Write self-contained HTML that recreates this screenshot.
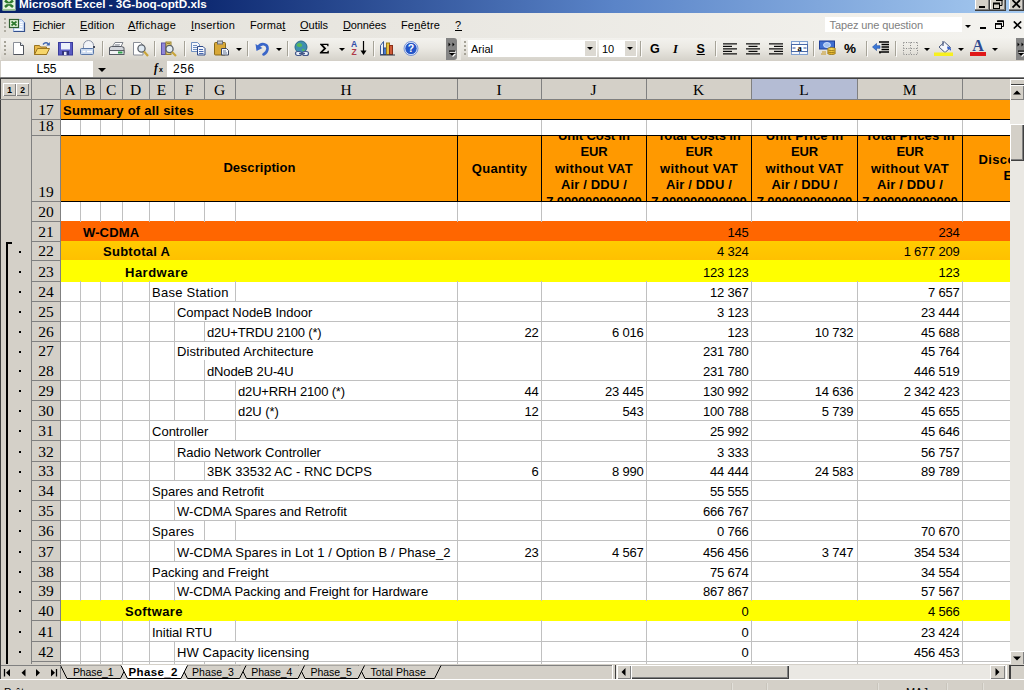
<!DOCTYPE html>
<html><head><meta charset="utf-8"><title>Microsoft Excel - 3G-boq-optD.xls</title>
<style>
html,body{margin:0;padding:0;}
body{width:1024px;height:690px;overflow:hidden;position:relative;background:#d4d0c8;
font-family:"Liberation Sans",sans-serif;font-size:12px;color:#000;}
#s{position:absolute;left:0;top:0;width:1024px;height:690px;overflow:hidden;}
#s div,#s svg{position:absolute;box-sizing:border-box;}
</style></head><body><div id="s">
<div style="left:0px;top:0px;width:1024px;height:690px;background:#d4d0c8;"></div>
<div style="left:0px;top:0px;width:1024px;height:13px;background:linear-gradient(to right,#0a246a 0%,#0e2a72 20%,#5a84c8 60%,#a6caf0 100%);"></div>
<div style="top:-3.55px;font-size:11.7px;line-height:15px;height:15px;color:#fff;white-space:pre;font-weight:bold;left:19px;">Microsoft Excel - 3G-boq-optD.xls</div>
<svg style="left:2px;top:0" width="15" height="12" viewBox="0 0 15 12"><rect x="0.5" y="-4" width="13" height="14.500" fill="#e6f4dc"/><rect x="0.5" y="9" width="13" height="1.500" fill="#9cc890"/><path d="M3 0.500 L11 7 M11 0.500 L3 7" stroke="#2e7a2e" stroke-width="2.600"/><path d="M3 3.700 h8" stroke="#e6f4dc" stroke-width="0.800"/></svg>
<div style="left:975px;top:-4px;width:15px;height:14.5px;background:#d4d0c8;box-shadow:inset -1px -1px 0 #404040,inset -2px -2px 0 #808080,inset 1px 1px 0 #fff;"></div>
<div style="left:979px;top:6px;width:6px;height:2px;background:#000;"></div>
<div style="left:990px;top:-4px;width:16px;height:14.5px;background:#d4d0c8;box-shadow:inset -1px -1px 0 #404040,inset -2px -2px 0 #808080,inset 1px 1px 0 #fff;"></div>
<svg style="left:993px;top:0" width="10" height="10"><path d="M3.5 0 h5.5 v5.5 h-2" fill="none" stroke="#000" stroke-width="1"/><rect x="3" y="-1" width="6.5" height="2" fill="#000"/><rect x="0.5" y="3.5" width="6" height="5" fill="none" stroke="#000"/><rect x="0" y="2.5" width="7" height="2" fill="#000"/></svg>
<div style="left:1009px;top:-4px;width:15px;height:14.5px;background:#d4d0c8;box-shadow:inset -1px -1px 0 #404040,inset -2px -2px 0 #808080,inset 1px 1px 0 #fff;"></div>
<svg style="left:1012px;top:0" width="10" height="9"><path d="M0.5 0 L8 7.5 M8 0 L0.5 7.5" stroke="#000" stroke-width="1.8"/></svg>
<div style="left:0px;top:13px;width:1024px;height:24px;background:linear-gradient(to right,#e4e2db 0%,#e9e7e1 40%,#f4f3ef 100%);"></div>
<div style="left:4px;top:18px;width:2px;height:2px;background:#b0ada2;"></div>
<div style="left:4px;top:22px;width:2px;height:2px;background:#b0ada2;"></div>
<div style="left:4px;top:26px;width:2px;height:2px;background:#b0ada2;"></div>
<div style="left:4px;top:30px;width:2px;height:2px;background:#b0ada2;"></div>
<svg style="left:8px;top:17px" width="18" height="16" viewBox="0 0 18 16"><path d="M5.500 2.500 h8 l3 3 v9 h-11z" fill="#d6e4fa" stroke="#8fa8d8"/><path d="M16.500 5.500 v9 h-11" fill="none" stroke="#34508c" stroke-width="1.200"/><path d="M11.500 5.500h3M11.500 7.500h3M11.500 9.500h3M7 12.500h7" stroke="#fff" stroke-width="1"/><rect x="1.500" y="2.500" width="9" height="8" fill="#e6f4dc" stroke="#2f5f2f" stroke-width="1.200"/><path d="M3.500 4.500 L8.500 8.500 M8.500 4.500 L3.500 8.500" stroke="#2e7a2e" stroke-width="1.700"/></svg>
<div style="left:33px;top:18px;font-size:11px;line-height:14px;white-space:pre;letter-spacing:-0.145px;"><u>F</u>ichier</div>
<div style="left:80px;top:18px;font-size:11px;line-height:14px;white-space:pre;letter-spacing:0.123px;"><u>E</u>dition</div>
<div style="left:128px;top:18px;font-size:11px;line-height:14px;white-space:pre;letter-spacing:0.259px;"><u>A</u>ffichage</div>
<div style="left:191px;top:18px;font-size:11px;line-height:14px;white-space:pre;letter-spacing:0.2px;"><u>I</u>nsertion</div>
<div style="left:250px;top:18px;font-size:11px;line-height:14px;white-space:pre;letter-spacing:0.109px;">Forma<u>t</u></div>
<div style="left:300px;top:18px;font-size:11px;line-height:14px;white-space:pre;letter-spacing:-0.021px;"><u>O</u>utils</div>
<div style="left:343px;top:18px;font-size:11px;line-height:14px;white-space:pre;letter-spacing:-0.15px;"><u>D</u>onnées</div>
<div style="left:401px;top:18px;font-size:11px;line-height:14px;white-space:pre;letter-spacing:0.154px;">Fe<u>n</u>être</div>
<div style="left:455px;top:18px;font-size:11px;line-height:14px;white-space:pre;letter-spacing:0.875px;"><u>?</u></div>
<div style="left:825px;top:17px;width:137px;height:15px;background:#fff;"></div>
<div style="top:18.19px;font-size:11px;line-height:14px;height:14px;color:#808080;white-space:pre;letter-spacing:-0.112px;left:829.5px;">Tapez une question</div>
<svg style="left:965px;top:25px" width="6" height="3"><path d="M0 0 h6 l-3 3z" fill="#000"/></svg>
<div style="left:980px;top:27px;width:6px;height:2px;background:#000;"></div>
<svg style="left:995px;top:20px" width="10" height="10"><path d="M2.5 1 h6 v5.5 h-2" fill="none" stroke="#000" stroke-width="1"/><rect x="2" y="0.5" width="7" height="1.6" fill="#000"/><rect x="0.5" y="3.5" width="6" height="5" fill="none" stroke="#000"/><rect x="0" y="3" width="7" height="1.8" fill="#000"/></svg>
<svg style="left:1013px;top:21px" width="10" height="9"><path d="M0.8 0.5 L8.2 7.5 M8.2 0.5 L0.8 7.5" stroke="#000" stroke-width="1.7"/></svg>
<div style="left:0px;top:37px;width:1024px;height:23px;background:linear-gradient(to right,#e4e2db 0%,#e9e7e1 40%,#f4f3ef 100%);"></div>
<div style="left:1px;top:38px;width:446px;height:22px;background:linear-gradient(to bottom,#f3f2ee 0%,#ebe9e3 45%,#d6d3cb 100%);border-radius:0 0 0 2px;"></div>
<div style="left:446px;top:38px;width:11px;height:22px;background:#848484;border-radius:0 3px 3px 0;"></div>
<div style="left:461px;top:38px;width:556px;height:22px;background:linear-gradient(to bottom,#f3f2ee 0%,#ebe9e3 45%,#d6d3cb 100%);"></div>
<div style="left:1016px;top:38px;width:8px;height:22px;background:#848484;"></div>
<div style="left:4px;top:41px;width:2px;height:2px;background:#a5a297;"></div>
<div style="left:4px;top:45px;width:2px;height:2px;background:#a5a297;"></div>
<div style="left:4px;top:49px;width:2px;height:2px;background:#a5a297;"></div>
<div style="left:4px;top:53px;width:2px;height:2px;background:#a5a297;"></div>
<div style="left:464px;top:41px;width:2px;height:2px;background:#a5a297;"></div>
<div style="left:464px;top:45px;width:2px;height:2px;background:#a5a297;"></div>
<div style="left:464px;top:49px;width:2px;height:2px;background:#a5a297;"></div>
<div style="left:464px;top:53px;width:2px;height:2px;background:#a5a297;"></div>
<div style="left:102px;top:41px;width:1px;height:15px;background:#a6a398;"></div>
<div style="left:103px;top:42px;width:1px;height:15px;background:#fbfaf8;"></div>
<div style="left:154px;top:41px;width:1px;height:15px;background:#a6a398;"></div>
<div style="left:155px;top:42px;width:1px;height:15px;background:#fbfaf8;"></div>
<div style="left:184px;top:41px;width:1px;height:15px;background:#a6a398;"></div>
<div style="left:185px;top:42px;width:1px;height:15px;background:#fbfaf8;"></div>
<div style="left:247px;top:41px;width:1px;height:15px;background:#a6a398;"></div>
<div style="left:248px;top:42px;width:1px;height:15px;background:#fbfaf8;"></div>
<div style="left:287px;top:41px;width:1px;height:15px;background:#a6a398;"></div>
<div style="left:288px;top:42px;width:1px;height:15px;background:#fbfaf8;"></div>
<div style="left:373px;top:41px;width:1px;height:15px;background:#a6a398;"></div>
<div style="left:374px;top:42px;width:1px;height:15px;background:#fbfaf8;"></div>
<div style="left:640px;top:41px;width:1px;height:15px;background:#a6a398;"></div>
<div style="left:641px;top:42px;width:1px;height:15px;background:#fbfaf8;"></div>
<div style="left:715px;top:41px;width:1px;height:15px;background:#a6a398;"></div>
<div style="left:716px;top:42px;width:1px;height:15px;background:#fbfaf8;"></div>
<div style="left:813px;top:41px;width:1px;height:15px;background:#a6a398;"></div>
<div style="left:814px;top:42px;width:1px;height:15px;background:#fbfaf8;"></div>
<div style="left:866px;top:41px;width:1px;height:15px;background:#a6a398;"></div>
<div style="left:867px;top:42px;width:1px;height:15px;background:#fbfaf8;"></div>
<div style="left:895px;top:41px;width:1px;height:15px;background:#a6a398;"></div>
<div style="left:896px;top:42px;width:1px;height:15px;background:#fbfaf8;"></div>
<svg style="left:236px;top:48px" width="6" height="3"><path d="M0 0 h6 l-3 3z" fill="#000"/></svg>
<svg style="left:276px;top:48px" width="6" height="3"><path d="M0 0 h6 l-3 3z" fill="#000"/></svg>
<svg style="left:339px;top:48px" width="6" height="3"><path d="M0 0 h6 l-3 3z" fill="#000"/></svg>
<svg style="left:924px;top:48px" width="6" height="3"><path d="M0 0 h6 l-3 3z" fill="#000"/></svg>
<svg style="left:958px;top:48px" width="6" height="3"><path d="M0 0 h6 l-3 3z" fill="#000"/></svg>
<svg style="left:992px;top:48px" width="6" height="3"><path d="M0 0 h6 l-3 3z" fill="#000"/></svg>
<svg style="left:447px;top:40px" width="10" height="18" viewBox="0 0 10 18"><path d="M1.5 2.5 l2 2 l-2 2z M5.5 2.5 l2 2 l-2 2z" fill="#000"/><rect x="3" y="11.500" width="6" height="1.200" fill="#fff"/><path d="M3 14 h6 l-3 3z" fill="#fff"/><rect x="2" y="10.500" width="6" height="1.200" fill="#000"/><path d="M2 13 h6 l-3 3z" fill="#000"/></svg>
<svg style="left:1016px;top:40px" width="8" height="18" viewBox="0 0 8 18"><path d="M1.5 2.5 l2 2 l-2 2z M5.5 2.5 l2 2 l-2 2z" fill="#000"/><rect x="3" y="11.500" width="6" height="1.200" fill="#fff"/><path d="M3 14 h6 l-3 3z" fill="#fff"/><rect x="2" y="10.500" width="6" height="1.200" fill="#000"/><path d="M2 13 h6 l-3 3z" fill="#000"/></svg>
<svg style="left:12px;top:41px" width="14" height="15" viewBox="0 0 14 15"><path d="M1.5 1.5 h7 l3 3 v9 h-10z" fill="#fff" stroke="#8a8f98"/><path d="M11.5 4.5 v9 h-10" fill="none" stroke="#50545c"/><path d="M8.5 1.5 v3 h3" fill="#dfe6f0" stroke="#50545c"/></svg>
<svg style="left:33px;top:41px" width="18" height="15" viewBox="0 0 18 15"><path d="M1.5 4.5 h5 l1 1.500 h6 v7.5 h-12z" fill="#e8b84a" stroke="#9a7420"/><path d="M1.5 13.500 l3 -6 h12 l-3 6z" fill="#f7d66a" stroke="#9a7420"/><path d="M10 3.500 c2 -2.500 4.500 -2 5.500 0" fill="none" stroke="#3c64b0" stroke-width="1.4"/><path d="M16.800 1 v3.600 h-3.600z" fill="#3c64b0"/></svg>
<svg style="left:58px;top:41px" width="15" height="15" viewBox="0 0 15 15"><rect x="0.5" y="1.500" width="14" height="12.500" fill="#5a5cc4" stroke="#3a3c9c"/><rect x="3" y="2" width="9" height="6.500" fill="#eef2fb"/><rect x="4" y="10" width="7" height="4" fill="#30327c"/><rect x="6" y="10.800" width="2.500" height="3.200" fill="#e8ecf6"/></svg>
<svg style="left:80px;top:40px" width="17" height="16" viewBox="0 0 17 16"><path d="M3.500 9 v-3.500 a5 5 0 0 1 10 0 v3.500" fill="#f1f3f7" stroke="#8a93a5"/><rect x="13" y="6" width="2" height="2" fill="#404858"/><rect x="0.500" y="8.500" width="13" height="6" rx="1" fill="#c9d8ee" stroke="#5776a8"/><path d="M2.500 11.500 h3 M7 11.500 h5" stroke="#fff" stroke-width="1.600"/></svg>
<svg style="left:108px;top:41px" width="17" height="15" viewBox="0 0 17 15"><path d="M4.500 5.500 l2.500 -4 h8 l-2 4z" fill="#fff" stroke="#80858c"/><path d="M7 3.500 h5 M6.500 4.600 h5" stroke="#9aa0a8" stroke-width="0.800"/><path d="M1.500 6.500 l2 -1 h10 l2.500 1 v5.500 h-14.500z" fill="#d4d7dc" stroke="#585c64"/><rect x="1.500" y="9.500" width="14.500" height="4" fill="#f2f3f5" stroke="#585c64"/><rect x="10" y="10.500" width="4.500" height="2" fill="#2fa04a"/></svg>
<svg style="left:132px;top:41px" width="18" height="16" viewBox="0 0 18 16"><path d="M1.500 1.500 h7 l2.500 2.500 v10 h-9.500z" fill="#fff" stroke="#8a8f98"/><circle cx="9.500" cy="7.500" r="3.600" fill="#dfe9f2" stroke="#5a6068" stroke-width="1.300"/><path d="M12 10.500 l4 4.500" stroke="#c8a43a" stroke-width="2.200"/></svg>
<svg style="left:160px;top:40px" width="19" height="17" viewBox="0 0 19 17"><rect x="1.500" y="3" width="4" height="11.500" fill="#8f86d8" stroke="#5a52a8"/><rect x="6" y="2" width="5" height="12.500" fill="#e8d078" stroke="#9a8430"/><path d="M7 3.500 h3" stroke="#9a8430"/><circle cx="9.500" cy="9" r="3.600" fill="#e2ecf4" stroke="#5a6068" stroke-width="1.300"/><path d="M12 12 l4 4" stroke="#c8a43a" stroke-width="2.200"/></svg>
<svg style="left:190px;top:41px" width="17" height="15" viewBox="0 0 17 15"><path d="M1.500 1.500 h6 l2 2 v7 h-8z" fill="#f4f7fc" stroke="#6f8fc0"/><path d="M3 4.500 h4 M3 6.500 h5 M3 8.500 h5" stroke="#6f8fc0"/><path d="M7.500 5.500 h5.500 l2 2 v6.500 h-7.500z" fill="#f4f7fc" stroke="#2f4a88"/><path d="M9 8.500 h4 M9 10.500 h4.500 M9 12.500 h4.500" stroke="#4a6ab0"/></svg>
<svg style="left:213px;top:40px" width="18" height="16" viewBox="0 0 18 16"><rect x="1.500" y="2.500" width="11" height="12.500" rx="1" fill="#d8a838" stroke="#8a6a18"/><rect x="4.500" y="1" width="5" height="3" fill="#c8ccd4" stroke="#6a6e78"/><path d="M8.500 8.500 h5 l2 2 v4.500 h-7z" fill="#f0f4fa" stroke="#3a4660"/><path d="M10 11 h3 M10 13 h4" stroke="#6a7a98"/></svg>
<svg style="left:255px;top:41px" width="15" height="15" viewBox="0 0 15 15"><path d="M3 6.500 c3 -5.500 10 -3.500 9.500 1.500 c-0.300 3 -2 4.500 -4 5.500" fill="none" stroke="#3a66c8" stroke-width="2.600" stroke-linecap="round"/><path d="M0.500 3 l1 7 l6 -3z" fill="#3a66c8"/></svg>
<svg style="left:293px;top:40px" width="18" height="17" viewBox="0 0 18 17"><circle cx="8" cy="7" r="6" fill="#3f8fb0" stroke="#2a6a8a"/><path d="M4 4 c2 -2 4 -1 5 0.500 c1 1.500 -1 3 -3 2.500 c-2 -0.500 -3 -1.500 -2 -3z" fill="#58b858"/><path d="M9 9 c1.500 -0.500 3 0.500 2.500 2 c-1 1 -2.500 0 -2.500 -2z" fill="#58b858"/><rect x="2.500" y="11.500" width="6" height="4" rx="2" fill="#e8eef8" stroke="#44588a" stroke-width="1.200"/><rect x="9.500" y="11.500" width="6" height="4" rx="2" fill="#e8eef8" stroke="#44588a" stroke-width="1.200"/><path d="M6 13.500 h6" stroke="#44588a" stroke-width="1.400"/></svg>
<svg style="left:319px;top:43px" width="11" height="11" viewBox="0 0 11 11"><path d="M1 0.800 h8.500 v2.400 h-1 l-0.500 -1.200 h-4 l3.300 3.500 l-3.600 3.500 h4.500 l0.600 -1.300 h1 v2.700 h-9 v-0.800 l4 -4 l-3.800 -4z" fill="#000"/></svg>
<div style="top:39.05px;font-size:8.5px;line-height:11px;height:11px;color:#2f4fa8;white-space:pre;font-weight:bold;left:351px;">A</div>
<div style="top:46.55px;font-size:8.5px;line-height:11px;height:11px;color:#b03a48;white-space:pre;font-weight:bold;left:351.5px;">Z</div>
<svg style="left:360px;top:41px" width="7" height="15" viewBox="0 0 7 15"><path d="M3.500 0 v12" stroke="#000" stroke-width="1.200"/><path d="M0.500 9.500 l3 4.500 l3 -4.500z" fill="#000"/></svg>
<svg style="left:379px;top:40px" width="17" height="16" viewBox="0 0 17 16"><path d="M1.500 14.500 v-9 l3 -4 v13z" fill="#e8eef8" stroke="#3a5a98"/><rect x="4.500" y="8" width="3" height="6.500" fill="#4a78c8" stroke="#2a4a88"/><rect x="7.500" y="3" width="3" height="11.500" fill="#e8c040" stroke="#9a7a18"/><rect x="10.500" y="5.500" width="3" height="9" fill="#d05a38" stroke="#8a3018"/><path d="M1 15 h15" stroke="#303848"/></svg>
<svg style="left:403px;top:41px" width="16" height="15" viewBox="0 0 16 15"><circle cx="8" cy="7.500" r="6.200" fill="#2456c8" stroke="#dfe8fb" stroke-width="1"/><circle cx="8" cy="7.500" r="7" fill="none" stroke="#4a72d0" stroke-width="0.700"/><text x="8" y="11.300" font-family="Liberation Sans" font-weight="bold" font-size="10.500" fill="#fff" text-anchor="middle">?</text></svg>
<div style="left:468px;top:40px;width:129px;height:17px;background:#fff;"></div>
<div style="left:585px;top:41px;width:11px;height:15px;background:#dcd9d2;"></div>
<div style="top:41.69px;font-size:11px;line-height:14px;height:14px;color:#000;white-space:pre;left:471px;">Arial</div>
<svg style="left:587px;top:47px" width="6" height="3"><path d="M0 0 h6 l-3 3z" fill="#000"/></svg>
<div style="left:599px;top:40px;width:38px;height:17px;background:#fff;"></div>
<div style="left:625px;top:41px;width:11px;height:15px;background:#dcd9d2;"></div>
<div style="top:41.69px;font-size:11px;line-height:14px;height:14px;color:#000;white-space:pre;left:602px;">10</div>
<svg style="left:627px;top:47px" width="6" height="3"><path d="M0 0 h6 l-3 3z" fill="#000"/></svg>
<div style="top:40.67px;font-size:12.5px;line-height:16px;height:16px;color:#000;white-space:pre;font-weight:bold;left:650px;">G</div>
<div style="top:40.78px;font-size:12.5px;line-height:16px;height:16px;color:#000;white-space:pre;font-family:'Liberation Serif',serif;font-weight:bold;font-style:italic;left:673px;">I</div>
<div style="top:40.67px;font-size:12.5px;line-height:16px;height:16px;color:#000;white-space:pre;font-weight:bold;left:696.5px;text-decoration:underline;">S</div>
<svg style="left:723px;top:43px" width="15" height="12" viewBox="0 0 15 12"><rect x="0" y="0.3" width="14" height="1.150" fill="#000"/><rect x="0" y="2.8" width="9" height="1.150" fill="#000"/><rect x="0" y="5.3" width="14" height="1.150" fill="#000"/><rect x="0" y="7.8" width="9" height="1.150" fill="#000"/><rect x="0" y="10.3" width="14" height="1.150" fill="#000"/></svg>
<svg style="left:746px;top:43px" width="15" height="12" viewBox="0 0 15 12"><rect x="0" y="0.3" width="14" height="1.150" fill="#000"/><rect x="2.5" y="2.8" width="9" height="1.150" fill="#000"/><rect x="0" y="5.3" width="14" height="1.150" fill="#000"/><rect x="2.5" y="7.8" width="9" height="1.150" fill="#000"/><rect x="0" y="10.3" width="14" height="1.150" fill="#000"/></svg>
<svg style="left:769px;top:43px" width="15" height="12" viewBox="0 0 15 12"><rect x="0" y="0.3" width="14" height="1.150" fill="#000"/><rect x="5" y="2.8" width="9" height="1.150" fill="#000"/><rect x="0" y="5.3" width="14" height="1.150" fill="#000"/><rect x="5" y="7.8" width="9" height="1.150" fill="#000"/><rect x="0" y="10.3" width="14" height="1.150" fill="#000"/></svg>
<svg style="left:791px;top:40px" width="17" height="16" viewBox="0 0 17 16"><rect x="0.500" y="1.500" width="16" height="13" fill="#f4f7fc" stroke="#7f9fd0"/><path d="M0.500 4.500 h16 M0.500 11.500 h16 M8.500 1.500 v3 M8.500 11.500 v3" stroke="#7f9fd0"/><rect x="0.500" y="4.500" width="16" height="7" fill="#fff" stroke="#4a6aa8"/><text x="8.500" y="11" font-family="Liberation Serif" font-weight="bold" font-size="8.500" text-anchor="middle" fill="#000">a</text><path d="M1.500 8 h3 M12.500 8 h3" stroke="#2a4a98" stroke-width="1.200"/></svg>
<svg style="left:819px;top:40px" width="18" height="16" viewBox="0 0 18 16"><rect x="0.500" y="1" width="15" height="8" fill="#3f6fd0" stroke="#1f3f98"/><ellipse cx="8" cy="5" rx="3.500" ry="2.500" fill="#9fc0f0" stroke="#dfeaff" stroke-width="0.800"/><ellipse cx="12.500" cy="13" rx="4" ry="1.500" fill="#e8b830" stroke="#8a6a10" stroke-width="0.800"/><ellipse cx="12.500" cy="11" rx="4" ry="1.500" fill="#f0c840" stroke="#8a6a10" stroke-width="0.800"/><ellipse cx="12.500" cy="9" rx="4" ry="1.500" fill="#f8d858" stroke="#8a6a10" stroke-width="0.800"/><path d="M3 12 h4 M2 14 h5" stroke="#c89820" stroke-width="1.200"/></svg>
<div style="top:39.82px;font-size:13.5px;line-height:18px;height:18px;color:#000;white-space:pre;font-weight:bold;left:844px;">%</div>
<svg style="left:872px;top:41px" width="18" height="14" viewBox="0 0 18 14"><path d="M7 1 h10 M9.500 3.500 h7.500 M9.500 6 h7.500 M9.500 8.500 h7.500 M7 11 h10" stroke="#000" stroke-width="1.400"/><path d="M7 11.800 h2 M7 13 h0" stroke="#000"/><path d="M0.500 6 l4 -3.500 v2.200 h3.500 v2.600 h-3.500 v2.200z" fill="#3a78d8" stroke="#1f4aa0" stroke-width="0.600"/></svg>
<svg style="left:903px;top:42px" width="16" height="13" viewBox="0 0 16 13"><path d="M0.500 0.500 h14 M0.500 6.500 h14 M0.500 12.500 h14 M0.500 0.500 v12 M7.500 0.500 v12 M14.500 0.500 v12" stroke="#8a8a8a" stroke-width="1" stroke-dasharray="1 1.500" fill="none"/></svg>
<svg style="left:933px;top:40px" width="21" height="17" viewBox="0 0 21 17"><path d="M6 7 l5.500 -5 l6 5.500 l-5.500 5z" fill="#f6f8fc" stroke="#4a5a80"/><path d="M10 1 v5" stroke="#4a5a80" stroke-width="1.200"/><path d="M14 6.500 c3 0 4.500 1.500 4 4.500 c-1 -1.500 -2 -2 -3.500 -2z" fill="#3a62c8"/><rect x="1" y="12.500" width="19" height="3.500" fill="#f7f020"/></svg>
<div style="left:971px;top:38px;width:14px;font-family:'Liberation Serif',serif;font-weight:bold;font-size:16px;line-height:16px;color:#2f4a90;text-align:center;">A</div>
<div style="left:970px;top:52px;width:16px;height:4px;background:#e01818;"></div>
<div style="left:0px;top:60px;width:1024px;height:18px;background:#d4d0c8;"></div>
<div style="left:0px;top:77px;width:1024px;height:1px;background:#808080;"></div>
<div style="left:1px;top:61px;width:92px;height:16px;background:#fff;"></div>
<div style="top:60.84px;font-size:12px;line-height:16px;height:16px;color:#000;white-space:pre;left:16.5px;width:60px;text-align:center;">L55</div>
<svg style="left:98px;top:68px" width="8" height="4"><path d="M0 0 h8 l-4 4z" fill="#000"/></svg>
<div style="left:154px;top:61.5px;font-family:'Liberation Serif',serif;font-style:italic;font-weight:bold;font-size:11.5px;line-height:13px;">f</div>
<div style="left:159px;top:65.5px;font-size:7px;font-weight:bold;line-height:8px;">x</div>
<div style="left:167px;top:61px;width:857px;height:16px;background:#fff;"></div>
<div style="top:60.84px;font-size:12px;line-height:16px;height:16px;color:#000;white-space:pre;letter-spacing:0.523px;left:173px;">256</div>
<div style="left:0px;top:78px;width:1024px;height:1px;background:#404040;"></div>
<div style="left:0px;top:79px;width:1010px;height:585px;background:#fff;"></div>
<div style="left:0px;top:79px;width:32px;height:585px;background:#d4d0c8;"></div>
<div style="left:32px;top:79px;width:29px;height:585px;background:#d4d0c8;"></div>
<div style="left:61px;top:79px;width:949px;height:20px;background:#d4d0c8;"></div>
<div style="left:0px;top:79px;width:1px;height:600px;background:#404040;"></div>
<div style="left:31px;top:79px;width:1px;height:585px;background:#808080;"></div>
<div style="left:60px;top:79px;width:1px;height:585px;background:#808080;"></div>
<div style="left:0px;top:99px;width:1010px;height:1px;background:#808080;"></div>
<div style="left:752px;top:79px;width:105px;height:20px;background:#b4bcd4;"></div>
<div style="left:80px;top:79px;width:1px;height:20px;background:#808080;"></div>
<div style="top:79.77px;font-size:15.5px;line-height:20px;height:20px;color:#000;white-space:pre;font-family:'Liberation Serif',serif;left:50.099999999999994px;width:40px;text-align:center;">A</div>
<div style="left:100px;top:79px;width:1px;height:20px;background:#808080;"></div>
<div style="top:79.77px;font-size:15.5px;line-height:20px;height:20px;color:#000;white-space:pre;font-family:'Liberation Serif',serif;left:70.1px;width:40px;text-align:center;">B</div>
<div style="left:122px;top:79px;width:1px;height:20px;background:#808080;"></div>
<div style="top:79.77px;font-size:15.5px;line-height:20px;height:20px;color:#000;white-space:pre;font-family:'Liberation Serif',serif;left:91.1px;width:40px;text-align:center;">C</div>
<div style="left:149px;top:79px;width:1px;height:20px;background:#808080;"></div>
<div style="top:79.77px;font-size:15.5px;line-height:20px;height:20px;color:#000;white-space:pre;font-family:'Liberation Serif',serif;left:115.6px;width:40px;text-align:center;">D</div>
<div style="left:174px;top:79px;width:1px;height:20px;background:#808080;"></div>
<div style="top:79.77px;font-size:15.5px;line-height:20px;height:20px;color:#000;white-space:pre;font-family:'Liberation Serif',serif;left:141.6px;width:40px;text-align:center;">E</div>
<div style="left:204px;top:79px;width:1px;height:20px;background:#808080;"></div>
<div style="top:79.77px;font-size:15.5px;line-height:20px;height:20px;color:#000;white-space:pre;font-family:'Liberation Serif',serif;left:169.1px;width:40px;text-align:center;">F</div>
<div style="left:235px;top:79px;width:1px;height:20px;background:#808080;"></div>
<div style="top:79.77px;font-size:15.5px;line-height:20px;height:20px;color:#000;white-space:pre;font-family:'Liberation Serif',serif;left:199.6px;width:40px;text-align:center;">G</div>
<div style="left:457px;top:79px;width:1px;height:20px;background:#808080;"></div>
<div style="top:79.77px;font-size:15.5px;line-height:20px;height:20px;color:#000;white-space:pre;font-family:'Liberation Serif',serif;left:326.1px;width:40px;text-align:center;">H</div>
<div style="left:541px;top:79px;width:1px;height:20px;background:#808080;"></div>
<div style="top:79.77px;font-size:15.5px;line-height:20px;height:20px;color:#000;white-space:pre;font-family:'Liberation Serif',serif;left:479.1px;width:40px;text-align:center;">I</div>
<div style="left:646px;top:79px;width:1px;height:20px;background:#808080;"></div>
<div style="top:79.77px;font-size:15.5px;line-height:20px;height:20px;color:#000;white-space:pre;font-family:'Liberation Serif',serif;left:573.6px;width:40px;text-align:center;">J</div>
<div style="left:751px;top:79px;width:1px;height:20px;background:#808080;"></div>
<div style="top:79.77px;font-size:15.5px;line-height:20px;height:20px;color:#000;white-space:pre;font-family:'Liberation Serif',serif;left:678.6px;width:40px;text-align:center;">K</div>
<div style="left:857px;top:79px;width:1px;height:20px;background:#808080;"></div>
<div style="top:79.77px;font-size:15.5px;line-height:20px;height:20px;color:#000;white-space:pre;font-family:'Liberation Serif',serif;left:784.1px;width:40px;text-align:center;">L</div>
<div style="left:962px;top:79px;width:1px;height:20px;background:#808080;"></div>
<div style="top:79.77px;font-size:15.5px;line-height:20px;height:20px;color:#000;white-space:pre;font-family:'Liberation Serif',serif;left:889.6px;width:40px;text-align:center;">M</div>
<div style="left:61px;top:100px;width:949px;height:20px;background:#ff9900;"></div>
<div style="left:61px;top:136px;width:949px;height:66px;background:#ff9900;"></div>
<div style="left:61px;top:221px;width:949px;height:20px;background:#ff6600;"></div>
<div style="left:61px;top:241px;width:949px;height:19px;background:linear-gradient(to bottom,#ffcc00,#ffc000);"></div>
<div style="left:61px;top:260px;width:949px;height:22px;background:#ffff00;"></div>
<div style="left:61px;top:600px;width:949px;height:21px;background:#ffff00;"></div>
<div style="left:61px;top:135px;width:949px;height:1px;background:#c0c0c0;"></div>
<div style="left:61px;top:301px;width:949px;height:1px;background:#c0c0c0;"></div>
<div style="left:61px;top:321px;width:949px;height:1px;background:#c0c0c0;"></div>
<div style="left:61px;top:341px;width:949px;height:1px;background:#c0c0c0;"></div>
<div style="left:61px;top:380px;width:949px;height:1px;background:#c0c0c0;"></div>
<div style="left:61px;top:400px;width:949px;height:1px;background:#c0c0c0;"></div>
<div style="left:61px;top:420px;width:949px;height:1px;background:#c0c0c0;"></div>
<div style="left:61px;top:440px;width:949px;height:1px;background:#c0c0c0;"></div>
<div style="left:61px;top:461px;width:949px;height:1px;background:#c0c0c0;"></div>
<div style="left:61px;top:480px;width:949px;height:1px;background:#c0c0c0;"></div>
<div style="left:61px;top:500px;width:949px;height:1px;background:#c0c0c0;"></div>
<div style="left:61px;top:520px;width:949px;height:1px;background:#c0c0c0;"></div>
<div style="left:61px;top:540px;width:949px;height:1px;background:#c0c0c0;"></div>
<div style="left:61px;top:561px;width:949px;height:1px;background:#c0c0c0;"></div>
<div style="left:61px;top:581px;width:949px;height:1px;background:#c0c0c0;"></div>
<div style="left:61px;top:641px;width:949px;height:1px;background:#c0c0c0;"></div>
<div style="left:61px;top:661px;width:949px;height:1px;background:#c0c0c0;"></div>
<div style="left:80px;top:119px;width:1px;height:17px;background:#c0c0c0;"></div>
<div style="left:100px;top:119px;width:1px;height:17px;background:#c0c0c0;"></div>
<div style="left:122px;top:119px;width:1px;height:17px;background:#c0c0c0;"></div>
<div style="left:149px;top:119px;width:1px;height:17px;background:#c0c0c0;"></div>
<div style="left:174px;top:119px;width:1px;height:17px;background:#c0c0c0;"></div>
<div style="left:204px;top:119px;width:1px;height:17px;background:#c0c0c0;"></div>
<div style="left:235px;top:119px;width:1px;height:17px;background:#c0c0c0;"></div>
<div style="left:457px;top:119px;width:1px;height:17px;background:#c0c0c0;"></div>
<div style="left:541px;top:119px;width:1px;height:17px;background:#c0c0c0;"></div>
<div style="left:646px;top:119px;width:1px;height:17px;background:#c0c0c0;"></div>
<div style="left:751px;top:119px;width:1px;height:17px;background:#c0c0c0;"></div>
<div style="left:857px;top:119px;width:1px;height:17px;background:#c0c0c0;"></div>
<div style="left:962px;top:119px;width:1px;height:17px;background:#c0c0c0;"></div>
<div style="left:80px;top:201px;width:1px;height:21px;background:#c0c0c0;"></div>
<div style="left:100px;top:201px;width:1px;height:21px;background:#c0c0c0;"></div>
<div style="left:122px;top:201px;width:1px;height:21px;background:#c0c0c0;"></div>
<div style="left:149px;top:201px;width:1px;height:21px;background:#c0c0c0;"></div>
<div style="left:174px;top:201px;width:1px;height:21px;background:#c0c0c0;"></div>
<div style="left:204px;top:201px;width:1px;height:21px;background:#c0c0c0;"></div>
<div style="left:235px;top:201px;width:1px;height:21px;background:#c0c0c0;"></div>
<div style="left:457px;top:201px;width:1px;height:21px;background:#c0c0c0;"></div>
<div style="left:541px;top:201px;width:1px;height:21px;background:#c0c0c0;"></div>
<div style="left:646px;top:201px;width:1px;height:21px;background:#c0c0c0;"></div>
<div style="left:751px;top:201px;width:1px;height:21px;background:#c0c0c0;"></div>
<div style="left:857px;top:201px;width:1px;height:21px;background:#c0c0c0;"></div>
<div style="left:962px;top:201px;width:1px;height:21px;background:#c0c0c0;"></div>
<div style="left:80px;top:281px;width:1px;height:21px;background:#c0c0c0;"></div>
<div style="left:100px;top:281px;width:1px;height:21px;background:#c0c0c0;"></div>
<div style="left:122px;top:281px;width:1px;height:21px;background:#c0c0c0;"></div>
<div style="left:149px;top:281px;width:1px;height:21px;background:#c0c0c0;"></div>
<div style="left:235px;top:281px;width:1px;height:21px;background:#c0c0c0;"></div>
<div style="left:457px;top:281px;width:1px;height:21px;background:#c0c0c0;"></div>
<div style="left:541px;top:281px;width:1px;height:21px;background:#c0c0c0;"></div>
<div style="left:646px;top:281px;width:1px;height:21px;background:#c0c0c0;"></div>
<div style="left:751px;top:281px;width:1px;height:21px;background:#c0c0c0;"></div>
<div style="left:857px;top:281px;width:1px;height:21px;background:#c0c0c0;"></div>
<div style="left:962px;top:281px;width:1px;height:21px;background:#c0c0c0;"></div>
<div style="left:80px;top:301px;width:1px;height:21px;background:#c0c0c0;"></div>
<div style="left:100px;top:301px;width:1px;height:21px;background:#c0c0c0;"></div>
<div style="left:122px;top:301px;width:1px;height:21px;background:#c0c0c0;"></div>
<div style="left:149px;top:301px;width:1px;height:21px;background:#c0c0c0;"></div>
<div style="left:174px;top:301px;width:1px;height:21px;background:#c0c0c0;"></div>
<div style="left:457px;top:301px;width:1px;height:21px;background:#c0c0c0;"></div>
<div style="left:541px;top:301px;width:1px;height:21px;background:#c0c0c0;"></div>
<div style="left:646px;top:301px;width:1px;height:21px;background:#c0c0c0;"></div>
<div style="left:751px;top:301px;width:1px;height:21px;background:#c0c0c0;"></div>
<div style="left:857px;top:301px;width:1px;height:21px;background:#c0c0c0;"></div>
<div style="left:962px;top:301px;width:1px;height:21px;background:#c0c0c0;"></div>
<div style="left:80px;top:321px;width:1px;height:21px;background:#c0c0c0;"></div>
<div style="left:100px;top:321px;width:1px;height:21px;background:#c0c0c0;"></div>
<div style="left:122px;top:321px;width:1px;height:21px;background:#c0c0c0;"></div>
<div style="left:149px;top:321px;width:1px;height:21px;background:#c0c0c0;"></div>
<div style="left:174px;top:321px;width:1px;height:21px;background:#c0c0c0;"></div>
<div style="left:204px;top:321px;width:1px;height:21px;background:#c0c0c0;"></div>
<div style="left:457px;top:321px;width:1px;height:21px;background:#c0c0c0;"></div>
<div style="left:541px;top:321px;width:1px;height:21px;background:#c0c0c0;"></div>
<div style="left:646px;top:321px;width:1px;height:21px;background:#c0c0c0;"></div>
<div style="left:751px;top:321px;width:1px;height:21px;background:#c0c0c0;"></div>
<div style="left:857px;top:321px;width:1px;height:21px;background:#c0c0c0;"></div>
<div style="left:962px;top:321px;width:1px;height:21px;background:#c0c0c0;"></div>
<div style="left:80px;top:341px;width:1px;height:20px;background:#c0c0c0;"></div>
<div style="left:100px;top:341px;width:1px;height:20px;background:#c0c0c0;"></div>
<div style="left:122px;top:341px;width:1px;height:20px;background:#c0c0c0;"></div>
<div style="left:149px;top:341px;width:1px;height:20px;background:#c0c0c0;"></div>
<div style="left:174px;top:341px;width:1px;height:20px;background:#c0c0c0;"></div>
<div style="left:457px;top:341px;width:1px;height:20px;background:#c0c0c0;"></div>
<div style="left:541px;top:341px;width:1px;height:20px;background:#c0c0c0;"></div>
<div style="left:646px;top:341px;width:1px;height:20px;background:#c0c0c0;"></div>
<div style="left:751px;top:341px;width:1px;height:20px;background:#c0c0c0;"></div>
<div style="left:857px;top:341px;width:1px;height:20px;background:#c0c0c0;"></div>
<div style="left:962px;top:341px;width:1px;height:20px;background:#c0c0c0;"></div>
<div style="left:80px;top:360px;width:1px;height:21px;background:#c0c0c0;"></div>
<div style="left:100px;top:360px;width:1px;height:21px;background:#c0c0c0;"></div>
<div style="left:122px;top:360px;width:1px;height:21px;background:#c0c0c0;"></div>
<div style="left:149px;top:360px;width:1px;height:21px;background:#c0c0c0;"></div>
<div style="left:174px;top:360px;width:1px;height:21px;background:#c0c0c0;"></div>
<div style="left:204px;top:360px;width:1px;height:21px;background:#c0c0c0;"></div>
<div style="left:457px;top:360px;width:1px;height:21px;background:#c0c0c0;"></div>
<div style="left:541px;top:360px;width:1px;height:21px;background:#c0c0c0;"></div>
<div style="left:646px;top:360px;width:1px;height:21px;background:#c0c0c0;"></div>
<div style="left:751px;top:360px;width:1px;height:21px;background:#c0c0c0;"></div>
<div style="left:857px;top:360px;width:1px;height:21px;background:#c0c0c0;"></div>
<div style="left:962px;top:360px;width:1px;height:21px;background:#c0c0c0;"></div>
<div style="left:80px;top:380px;width:1px;height:21px;background:#c0c0c0;"></div>
<div style="left:100px;top:380px;width:1px;height:21px;background:#c0c0c0;"></div>
<div style="left:122px;top:380px;width:1px;height:21px;background:#c0c0c0;"></div>
<div style="left:149px;top:380px;width:1px;height:21px;background:#c0c0c0;"></div>
<div style="left:174px;top:380px;width:1px;height:21px;background:#c0c0c0;"></div>
<div style="left:204px;top:380px;width:1px;height:21px;background:#c0c0c0;"></div>
<div style="left:235px;top:380px;width:1px;height:21px;background:#c0c0c0;"></div>
<div style="left:457px;top:380px;width:1px;height:21px;background:#c0c0c0;"></div>
<div style="left:541px;top:380px;width:1px;height:21px;background:#c0c0c0;"></div>
<div style="left:646px;top:380px;width:1px;height:21px;background:#c0c0c0;"></div>
<div style="left:751px;top:380px;width:1px;height:21px;background:#c0c0c0;"></div>
<div style="left:857px;top:380px;width:1px;height:21px;background:#c0c0c0;"></div>
<div style="left:962px;top:380px;width:1px;height:21px;background:#c0c0c0;"></div>
<div style="left:80px;top:400px;width:1px;height:21px;background:#c0c0c0;"></div>
<div style="left:100px;top:400px;width:1px;height:21px;background:#c0c0c0;"></div>
<div style="left:122px;top:400px;width:1px;height:21px;background:#c0c0c0;"></div>
<div style="left:149px;top:400px;width:1px;height:21px;background:#c0c0c0;"></div>
<div style="left:174px;top:400px;width:1px;height:21px;background:#c0c0c0;"></div>
<div style="left:204px;top:400px;width:1px;height:21px;background:#c0c0c0;"></div>
<div style="left:235px;top:400px;width:1px;height:21px;background:#c0c0c0;"></div>
<div style="left:457px;top:400px;width:1px;height:21px;background:#c0c0c0;"></div>
<div style="left:541px;top:400px;width:1px;height:21px;background:#c0c0c0;"></div>
<div style="left:646px;top:400px;width:1px;height:21px;background:#c0c0c0;"></div>
<div style="left:751px;top:400px;width:1px;height:21px;background:#c0c0c0;"></div>
<div style="left:857px;top:400px;width:1px;height:21px;background:#c0c0c0;"></div>
<div style="left:962px;top:400px;width:1px;height:21px;background:#c0c0c0;"></div>
<div style="left:80px;top:420px;width:1px;height:21px;background:#c0c0c0;"></div>
<div style="left:100px;top:420px;width:1px;height:21px;background:#c0c0c0;"></div>
<div style="left:122px;top:420px;width:1px;height:21px;background:#c0c0c0;"></div>
<div style="left:149px;top:420px;width:1px;height:21px;background:#c0c0c0;"></div>
<div style="left:235px;top:420px;width:1px;height:21px;background:#c0c0c0;"></div>
<div style="left:457px;top:420px;width:1px;height:21px;background:#c0c0c0;"></div>
<div style="left:541px;top:420px;width:1px;height:21px;background:#c0c0c0;"></div>
<div style="left:646px;top:420px;width:1px;height:21px;background:#c0c0c0;"></div>
<div style="left:751px;top:420px;width:1px;height:21px;background:#c0c0c0;"></div>
<div style="left:857px;top:420px;width:1px;height:21px;background:#c0c0c0;"></div>
<div style="left:962px;top:420px;width:1px;height:21px;background:#c0c0c0;"></div>
<div style="left:80px;top:440px;width:1px;height:22px;background:#c0c0c0;"></div>
<div style="left:100px;top:440px;width:1px;height:22px;background:#c0c0c0;"></div>
<div style="left:122px;top:440px;width:1px;height:22px;background:#c0c0c0;"></div>
<div style="left:149px;top:440px;width:1px;height:22px;background:#c0c0c0;"></div>
<div style="left:174px;top:440px;width:1px;height:22px;background:#c0c0c0;"></div>
<div style="left:457px;top:440px;width:1px;height:22px;background:#c0c0c0;"></div>
<div style="left:541px;top:440px;width:1px;height:22px;background:#c0c0c0;"></div>
<div style="left:646px;top:440px;width:1px;height:22px;background:#c0c0c0;"></div>
<div style="left:751px;top:440px;width:1px;height:22px;background:#c0c0c0;"></div>
<div style="left:857px;top:440px;width:1px;height:22px;background:#c0c0c0;"></div>
<div style="left:962px;top:440px;width:1px;height:22px;background:#c0c0c0;"></div>
<div style="left:80px;top:461px;width:1px;height:20px;background:#c0c0c0;"></div>
<div style="left:100px;top:461px;width:1px;height:20px;background:#c0c0c0;"></div>
<div style="left:122px;top:461px;width:1px;height:20px;background:#c0c0c0;"></div>
<div style="left:149px;top:461px;width:1px;height:20px;background:#c0c0c0;"></div>
<div style="left:174px;top:461px;width:1px;height:20px;background:#c0c0c0;"></div>
<div style="left:204px;top:461px;width:1px;height:20px;background:#c0c0c0;"></div>
<div style="left:457px;top:461px;width:1px;height:20px;background:#c0c0c0;"></div>
<div style="left:541px;top:461px;width:1px;height:20px;background:#c0c0c0;"></div>
<div style="left:646px;top:461px;width:1px;height:20px;background:#c0c0c0;"></div>
<div style="left:751px;top:461px;width:1px;height:20px;background:#c0c0c0;"></div>
<div style="left:857px;top:461px;width:1px;height:20px;background:#c0c0c0;"></div>
<div style="left:962px;top:461px;width:1px;height:20px;background:#c0c0c0;"></div>
<div style="left:80px;top:480px;width:1px;height:21px;background:#c0c0c0;"></div>
<div style="left:100px;top:480px;width:1px;height:21px;background:#c0c0c0;"></div>
<div style="left:122px;top:480px;width:1px;height:21px;background:#c0c0c0;"></div>
<div style="left:149px;top:480px;width:1px;height:21px;background:#c0c0c0;"></div>
<div style="left:457px;top:480px;width:1px;height:21px;background:#c0c0c0;"></div>
<div style="left:541px;top:480px;width:1px;height:21px;background:#c0c0c0;"></div>
<div style="left:646px;top:480px;width:1px;height:21px;background:#c0c0c0;"></div>
<div style="left:751px;top:480px;width:1px;height:21px;background:#c0c0c0;"></div>
<div style="left:857px;top:480px;width:1px;height:21px;background:#c0c0c0;"></div>
<div style="left:962px;top:480px;width:1px;height:21px;background:#c0c0c0;"></div>
<div style="left:80px;top:500px;width:1px;height:21px;background:#c0c0c0;"></div>
<div style="left:100px;top:500px;width:1px;height:21px;background:#c0c0c0;"></div>
<div style="left:122px;top:500px;width:1px;height:21px;background:#c0c0c0;"></div>
<div style="left:149px;top:500px;width:1px;height:21px;background:#c0c0c0;"></div>
<div style="left:174px;top:500px;width:1px;height:21px;background:#c0c0c0;"></div>
<div style="left:457px;top:500px;width:1px;height:21px;background:#c0c0c0;"></div>
<div style="left:541px;top:500px;width:1px;height:21px;background:#c0c0c0;"></div>
<div style="left:646px;top:500px;width:1px;height:21px;background:#c0c0c0;"></div>
<div style="left:751px;top:500px;width:1px;height:21px;background:#c0c0c0;"></div>
<div style="left:857px;top:500px;width:1px;height:21px;background:#c0c0c0;"></div>
<div style="left:962px;top:500px;width:1px;height:21px;background:#c0c0c0;"></div>
<div style="left:80px;top:520px;width:1px;height:21px;background:#c0c0c0;"></div>
<div style="left:100px;top:520px;width:1px;height:21px;background:#c0c0c0;"></div>
<div style="left:122px;top:520px;width:1px;height:21px;background:#c0c0c0;"></div>
<div style="left:149px;top:520px;width:1px;height:21px;background:#c0c0c0;"></div>
<div style="left:204px;top:520px;width:1px;height:21px;background:#c0c0c0;"></div>
<div style="left:235px;top:520px;width:1px;height:21px;background:#c0c0c0;"></div>
<div style="left:457px;top:520px;width:1px;height:21px;background:#c0c0c0;"></div>
<div style="left:541px;top:520px;width:1px;height:21px;background:#c0c0c0;"></div>
<div style="left:646px;top:520px;width:1px;height:21px;background:#c0c0c0;"></div>
<div style="left:751px;top:520px;width:1px;height:21px;background:#c0c0c0;"></div>
<div style="left:857px;top:520px;width:1px;height:21px;background:#c0c0c0;"></div>
<div style="left:962px;top:520px;width:1px;height:21px;background:#c0c0c0;"></div>
<div style="left:80px;top:540px;width:1px;height:22px;background:#c0c0c0;"></div>
<div style="left:100px;top:540px;width:1px;height:22px;background:#c0c0c0;"></div>
<div style="left:122px;top:540px;width:1px;height:22px;background:#c0c0c0;"></div>
<div style="left:149px;top:540px;width:1px;height:22px;background:#c0c0c0;"></div>
<div style="left:174px;top:540px;width:1px;height:22px;background:#c0c0c0;"></div>
<div style="left:457px;top:540px;width:1px;height:22px;background:#c0c0c0;"></div>
<div style="left:541px;top:540px;width:1px;height:22px;background:#c0c0c0;"></div>
<div style="left:646px;top:540px;width:1px;height:22px;background:#c0c0c0;"></div>
<div style="left:751px;top:540px;width:1px;height:22px;background:#c0c0c0;"></div>
<div style="left:857px;top:540px;width:1px;height:22px;background:#c0c0c0;"></div>
<div style="left:962px;top:540px;width:1px;height:22px;background:#c0c0c0;"></div>
<div style="left:80px;top:561px;width:1px;height:21px;background:#c0c0c0;"></div>
<div style="left:100px;top:561px;width:1px;height:21px;background:#c0c0c0;"></div>
<div style="left:122px;top:561px;width:1px;height:21px;background:#c0c0c0;"></div>
<div style="left:149px;top:561px;width:1px;height:21px;background:#c0c0c0;"></div>
<div style="left:457px;top:561px;width:1px;height:21px;background:#c0c0c0;"></div>
<div style="left:541px;top:561px;width:1px;height:21px;background:#c0c0c0;"></div>
<div style="left:646px;top:561px;width:1px;height:21px;background:#c0c0c0;"></div>
<div style="left:751px;top:561px;width:1px;height:21px;background:#c0c0c0;"></div>
<div style="left:857px;top:561px;width:1px;height:21px;background:#c0c0c0;"></div>
<div style="left:962px;top:561px;width:1px;height:21px;background:#c0c0c0;"></div>
<div style="left:80px;top:581px;width:1px;height:20px;background:#c0c0c0;"></div>
<div style="left:100px;top:581px;width:1px;height:20px;background:#c0c0c0;"></div>
<div style="left:122px;top:581px;width:1px;height:20px;background:#c0c0c0;"></div>
<div style="left:149px;top:581px;width:1px;height:20px;background:#c0c0c0;"></div>
<div style="left:174px;top:581px;width:1px;height:20px;background:#c0c0c0;"></div>
<div style="left:457px;top:581px;width:1px;height:20px;background:#c0c0c0;"></div>
<div style="left:541px;top:581px;width:1px;height:20px;background:#c0c0c0;"></div>
<div style="left:646px;top:581px;width:1px;height:20px;background:#c0c0c0;"></div>
<div style="left:751px;top:581px;width:1px;height:20px;background:#c0c0c0;"></div>
<div style="left:857px;top:581px;width:1px;height:20px;background:#c0c0c0;"></div>
<div style="left:962px;top:581px;width:1px;height:20px;background:#c0c0c0;"></div>
<div style="left:80px;top:620px;width:1px;height:22px;background:#c0c0c0;"></div>
<div style="left:100px;top:620px;width:1px;height:22px;background:#c0c0c0;"></div>
<div style="left:122px;top:620px;width:1px;height:22px;background:#c0c0c0;"></div>
<div style="left:149px;top:620px;width:1px;height:22px;background:#c0c0c0;"></div>
<div style="left:235px;top:620px;width:1px;height:22px;background:#c0c0c0;"></div>
<div style="left:457px;top:620px;width:1px;height:22px;background:#c0c0c0;"></div>
<div style="left:541px;top:620px;width:1px;height:22px;background:#c0c0c0;"></div>
<div style="left:646px;top:620px;width:1px;height:22px;background:#c0c0c0;"></div>
<div style="left:751px;top:620px;width:1px;height:22px;background:#c0c0c0;"></div>
<div style="left:857px;top:620px;width:1px;height:22px;background:#c0c0c0;"></div>
<div style="left:962px;top:620px;width:1px;height:22px;background:#c0c0c0;"></div>
<div style="left:80px;top:641px;width:1px;height:21px;background:#c0c0c0;"></div>
<div style="left:100px;top:641px;width:1px;height:21px;background:#c0c0c0;"></div>
<div style="left:122px;top:641px;width:1px;height:21px;background:#c0c0c0;"></div>
<div style="left:149px;top:641px;width:1px;height:21px;background:#c0c0c0;"></div>
<div style="left:174px;top:641px;width:1px;height:21px;background:#c0c0c0;"></div>
<div style="left:457px;top:641px;width:1px;height:21px;background:#c0c0c0;"></div>
<div style="left:541px;top:641px;width:1px;height:21px;background:#c0c0c0;"></div>
<div style="left:646px;top:641px;width:1px;height:21px;background:#c0c0c0;"></div>
<div style="left:751px;top:641px;width:1px;height:21px;background:#c0c0c0;"></div>
<div style="left:857px;top:641px;width:1px;height:21px;background:#c0c0c0;"></div>
<div style="left:962px;top:641px;width:1px;height:21px;background:#c0c0c0;"></div>
<div style="left:80px;top:661px;width:1px;height:3px;background:#c0c0c0;"></div>
<div style="left:100px;top:661px;width:1px;height:3px;background:#c0c0c0;"></div>
<div style="left:122px;top:661px;width:1px;height:3px;background:#c0c0c0;"></div>
<div style="left:149px;top:661px;width:1px;height:3px;background:#c0c0c0;"></div>
<div style="left:174px;top:661px;width:1px;height:3px;background:#c0c0c0;"></div>
<div style="left:204px;top:661px;width:1px;height:3px;background:#c0c0c0;"></div>
<div style="left:235px;top:661px;width:1px;height:3px;background:#c0c0c0;"></div>
<div style="left:457px;top:661px;width:1px;height:3px;background:#c0c0c0;"></div>
<div style="left:541px;top:661px;width:1px;height:3px;background:#c0c0c0;"></div>
<div style="left:646px;top:661px;width:1px;height:3px;background:#c0c0c0;"></div>
<div style="left:751px;top:661px;width:1px;height:3px;background:#c0c0c0;"></div>
<div style="left:857px;top:661px;width:1px;height:3px;background:#c0c0c0;"></div>
<div style="left:962px;top:661px;width:1px;height:3px;background:#c0c0c0;"></div>
<div style="left:61px;top:119px;width:949px;height:1px;background:#000;"></div>
<div style="left:61px;top:135px;width:949px;height:1px;background:#000;"></div>
<div style="left:61px;top:201px;width:949px;height:1px;background:#000;"></div>
<div style="left:457px;top:136px;width:1px;height:65px;background:#000;"></div>
<div style="left:541px;top:136px;width:1px;height:65px;background:#000;"></div>
<div style="left:646px;top:136px;width:1px;height:65px;background:#000;"></div>
<div style="left:751px;top:136px;width:1px;height:65px;background:#000;"></div>
<div style="left:857px;top:136px;width:1px;height:65px;background:#000;"></div>
<div style="left:962px;top:136px;width:1px;height:65px;background:#000;"></div>
<div style="left:32px;top:119px;width:28px;height:1px;background:#808080;"></div>
<div style="top:99.77px;font-size:15.5px;line-height:20px;height:20px;color:#000;white-space:pre;font-family:'Liberation Serif',serif;left:31.0px;width:30px;text-align:center;clip-path:inset(0 0 0px 0);">17</div>
<div style="left:32px;top:135px;width:28px;height:1px;background:#808080;"></div>
<div style="top:115.77px;font-size:15.5px;line-height:20px;height:20px;color:#000;white-space:pre;font-family:'Liberation Serif',serif;left:31.0px;width:30px;text-align:center;clip-path:inset(0 0 0px 0);">18</div>
<div style="left:32px;top:201px;width:28px;height:1px;background:#808080;"></div>
<div style="top:181.77px;font-size:15.5px;line-height:20px;height:20px;color:#000;white-space:pre;font-family:'Liberation Serif',serif;left:31.0px;width:30px;text-align:center;clip-path:inset(0 0 0px 0);">19</div>
<div style="left:32px;top:221px;width:28px;height:1px;background:#808080;"></div>
<div style="top:201.77px;font-size:15.5px;line-height:20px;height:20px;color:#000;white-space:pre;font-family:'Liberation Serif',serif;left:31.0px;width:30px;text-align:center;clip-path:inset(0 0 0px 0);">20</div>
<div style="left:32px;top:241px;width:28px;height:1px;background:#808080;"></div>
<div style="top:221.77px;font-size:15.5px;line-height:20px;height:20px;color:#000;white-space:pre;font-family:'Liberation Serif',serif;left:31.0px;width:30px;text-align:center;clip-path:inset(0 0 0px 0);">21</div>
<div style="left:32px;top:260px;width:28px;height:1px;background:#808080;"></div>
<div style="top:240.77px;font-size:15.5px;line-height:20px;height:20px;color:#000;white-space:pre;font-family:'Liberation Serif',serif;left:31.0px;width:30px;text-align:center;clip-path:inset(0 0 0px 0);">22</div>
<div style="left:32px;top:281px;width:28px;height:1px;background:#808080;"></div>
<div style="top:261.77px;font-size:15.5px;line-height:20px;height:20px;color:#000;white-space:pre;font-family:'Liberation Serif',serif;left:31.0px;width:30px;text-align:center;clip-path:inset(0 0 0px 0);">23</div>
<div style="left:32px;top:301px;width:28px;height:1px;background:#808080;"></div>
<div style="top:281.77px;font-size:15.5px;line-height:20px;height:20px;color:#000;white-space:pre;font-family:'Liberation Serif',serif;left:31.0px;width:30px;text-align:center;clip-path:inset(0 0 0px 0);">24</div>
<div style="left:32px;top:321px;width:28px;height:1px;background:#808080;"></div>
<div style="top:301.77px;font-size:15.5px;line-height:20px;height:20px;color:#000;white-space:pre;font-family:'Liberation Serif',serif;left:31.0px;width:30px;text-align:center;clip-path:inset(0 0 0px 0);">25</div>
<div style="left:32px;top:341px;width:28px;height:1px;background:#808080;"></div>
<div style="top:321.77px;font-size:15.5px;line-height:20px;height:20px;color:#000;white-space:pre;font-family:'Liberation Serif',serif;left:31.0px;width:30px;text-align:center;clip-path:inset(0 0 0px 0);">26</div>
<div style="top:340.77px;font-size:15.5px;line-height:20px;height:20px;color:#000;white-space:pre;font-family:'Liberation Serif',serif;left:31.0px;width:30px;text-align:center;clip-path:inset(0 0 0px 0);">27</div>
<div style="left:32px;top:380px;width:28px;height:1px;background:#808080;"></div>
<div style="top:360.77px;font-size:15.5px;line-height:20px;height:20px;color:#000;white-space:pre;font-family:'Liberation Serif',serif;left:31.0px;width:30px;text-align:center;clip-path:inset(0 0 0px 0);">28</div>
<div style="left:32px;top:400px;width:28px;height:1px;background:#808080;"></div>
<div style="top:380.77px;font-size:15.5px;line-height:20px;height:20px;color:#000;white-space:pre;font-family:'Liberation Serif',serif;left:31.0px;width:30px;text-align:center;clip-path:inset(0 0 0px 0);">29</div>
<div style="left:32px;top:420px;width:28px;height:1px;background:#808080;"></div>
<div style="top:400.77px;font-size:15.5px;line-height:20px;height:20px;color:#000;white-space:pre;font-family:'Liberation Serif',serif;left:31.0px;width:30px;text-align:center;clip-path:inset(0 0 0px 0);">30</div>
<div style="left:32px;top:440px;width:28px;height:1px;background:#808080;"></div>
<div style="top:420.77px;font-size:15.5px;line-height:20px;height:20px;color:#000;white-space:pre;font-family:'Liberation Serif',serif;left:31.0px;width:30px;text-align:center;clip-path:inset(0 0 0px 0);">31</div>
<div style="left:32px;top:461px;width:28px;height:1px;background:#808080;"></div>
<div style="top:441.77px;font-size:15.5px;line-height:20px;height:20px;color:#000;white-space:pre;font-family:'Liberation Serif',serif;left:31.0px;width:30px;text-align:center;clip-path:inset(0 0 0px 0);">32</div>
<div style="left:32px;top:480px;width:28px;height:1px;background:#808080;"></div>
<div style="top:460.77px;font-size:15.5px;line-height:20px;height:20px;color:#000;white-space:pre;font-family:'Liberation Serif',serif;left:31.0px;width:30px;text-align:center;clip-path:inset(0 0 0px 0);">33</div>
<div style="left:32px;top:500px;width:28px;height:1px;background:#808080;"></div>
<div style="top:480.77px;font-size:15.5px;line-height:20px;height:20px;color:#000;white-space:pre;font-family:'Liberation Serif',serif;left:31.0px;width:30px;text-align:center;clip-path:inset(0 0 0px 0);">34</div>
<div style="left:32px;top:520px;width:28px;height:1px;background:#808080;"></div>
<div style="top:500.77px;font-size:15.5px;line-height:20px;height:20px;color:#000;white-space:pre;font-family:'Liberation Serif',serif;left:31.0px;width:30px;text-align:center;clip-path:inset(0 0 0px 0);">35</div>
<div style="left:32px;top:540px;width:28px;height:1px;background:#808080;"></div>
<div style="top:520.77px;font-size:15.5px;line-height:20px;height:20px;color:#000;white-space:pre;font-family:'Liberation Serif',serif;left:31.0px;width:30px;text-align:center;clip-path:inset(0 0 0px 0);">36</div>
<div style="left:32px;top:561px;width:28px;height:1px;background:#808080;"></div>
<div style="top:541.77px;font-size:15.5px;line-height:20px;height:20px;color:#000;white-space:pre;font-family:'Liberation Serif',serif;left:31.0px;width:30px;text-align:center;clip-path:inset(0 0 0px 0);">37</div>
<div style="left:32px;top:581px;width:28px;height:1px;background:#808080;"></div>
<div style="top:561.77px;font-size:15.5px;line-height:20px;height:20px;color:#000;white-space:pre;font-family:'Liberation Serif',serif;left:31.0px;width:30px;text-align:center;clip-path:inset(0 0 0px 0);">38</div>
<div style="left:32px;top:600px;width:28px;height:1px;background:#808080;"></div>
<div style="top:580.77px;font-size:15.5px;line-height:20px;height:20px;color:#000;white-space:pre;font-family:'Liberation Serif',serif;left:31.0px;width:30px;text-align:center;clip-path:inset(0 0 0px 0);">39</div>
<div style="left:32px;top:620px;width:28px;height:1px;background:#808080;"></div>
<div style="top:600.77px;font-size:15.5px;line-height:20px;height:20px;color:#000;white-space:pre;font-family:'Liberation Serif',serif;left:31.0px;width:30px;text-align:center;clip-path:inset(0 0 0px 0);">40</div>
<div style="left:32px;top:641px;width:28px;height:1px;background:#808080;"></div>
<div style="top:621.77px;font-size:15.5px;line-height:20px;height:20px;color:#000;white-space:pre;font-family:'Liberation Serif',serif;left:31.0px;width:30px;text-align:center;clip-path:inset(0 0 0px 0);">41</div>
<div style="left:32px;top:661px;width:28px;height:1px;background:#808080;"></div>
<div style="top:641.77px;font-size:15.5px;line-height:20px;height:20px;color:#000;white-space:pre;font-family:'Liberation Serif',serif;left:31.0px;width:30px;text-align:center;clip-path:inset(0 0 0px 0);">42</div>
<div style="left:3px;top:83px;width:13px;height:13px;background:#d4d0c8;box-shadow:inset 1px 1px 0 #fff,inset -1px -1px 0 #808080;"></div>
<div style="top:84.55px;font-size:8.5px;line-height:11px;height:11px;color:#000;white-space:pre;font-weight:bold;left:3.5px;width:12px;text-align:center;">1</div>
<div style="left:16px;top:83px;width:13px;height:13px;background:#d4d0c8;box-shadow:inset 1px 1px 0 #fff,inset -1px -1px 0 #808080;"></div>
<div style="top:84.55px;font-size:8.5px;line-height:11px;height:11px;color:#000;white-space:pre;font-weight:bold;left:16.5px;width:12px;text-align:center;">2</div>
<div style="left:6px;top:242px;width:2px;height:422px;background:#000;"></div>
<div style="left:6px;top:242px;width:6px;height:2px;background:#000;"></div>
<div style="left:19px;top:251px;width:2px;height:2px;background:#000;"></div>
<div style="left:19px;top:271px;width:2px;height:2px;background:#000;"></div>
<div style="left:19px;top:291px;width:2px;height:2px;background:#000;"></div>
<div style="left:19px;top:311px;width:2px;height:2px;background:#000;"></div>
<div style="left:19px;top:331px;width:2px;height:2px;background:#000;"></div>
<div style="left:19px;top:351px;width:2px;height:2px;background:#000;"></div>
<div style="left:19px;top:370px;width:2px;height:2px;background:#000;"></div>
<div style="left:19px;top:390px;width:2px;height:2px;background:#000;"></div>
<div style="left:19px;top:410px;width:2px;height:2px;background:#000;"></div>
<div style="left:19px;top:430px;width:2px;height:2px;background:#000;"></div>
<div style="left:19px;top:451px;width:2px;height:2px;background:#000;"></div>
<div style="left:19px;top:471px;width:2px;height:2px;background:#000;"></div>
<div style="left:19px;top:490px;width:2px;height:2px;background:#000;"></div>
<div style="left:19px;top:510px;width:2px;height:2px;background:#000;"></div>
<div style="left:19px;top:530px;width:2px;height:2px;background:#000;"></div>
<div style="left:19px;top:551px;width:2px;height:2px;background:#000;"></div>
<div style="left:19px;top:571px;width:2px;height:2px;background:#000;"></div>
<div style="left:19px;top:591px;width:2px;height:2px;background:#000;"></div>
<div style="left:19px;top:610px;width:2px;height:2px;background:#000;"></div>
<div style="left:19px;top:631px;width:2px;height:2px;background:#000;"></div>
<div style="left:19px;top:651px;width:2px;height:2px;background:#000;"></div>
<div style="top:101.80px;font-size:13px;line-height:17px;height:17px;color:#000;white-space:pre;font-weight:bold;letter-spacing:0.222px;left:63px;">Summary of all sites</div>
<div style="top:223.80px;font-size:13px;line-height:17px;height:17px;color:#000;white-space:pre;font-weight:bold;letter-spacing:0.143px;left:83px;">W-CDMA</div>
<div style="top:242.80px;font-size:13px;line-height:17px;height:17px;color:#000;white-space:pre;font-weight:bold;letter-spacing:0.268px;left:103px;">Subtotal A</div>
<div style="top:263.80px;font-size:13px;line-height:17px;height:17px;color:#000;white-space:pre;font-weight:bold;letter-spacing:0.494px;left:125px;">Hardware</div>
<div style="top:602.80px;font-size:13px;line-height:17px;height:17px;color:#000;white-space:pre;font-weight:bold;letter-spacing:0.362px;left:125px;">Software</div>
<div style="top:283.80px;font-size:13px;line-height:17px;height:17px;color:#000;white-space:pre;letter-spacing:0.248px;left:152px;">Base Station</div>
<div style="top:303.80px;font-size:13px;line-height:17px;height:17px;color:#000;white-space:pre;letter-spacing:-0.033px;left:177px;">Compact NodeB Indoor</div>
<div style="top:323.80px;font-size:13px;line-height:17px;height:17px;color:#000;white-space:pre;letter-spacing:-0.171px;left:207px;">d2U+TRDU 2100 (*)</div>
<div style="top:342.80px;font-size:13px;line-height:17px;height:17px;color:#000;white-space:pre;letter-spacing:0.096px;left:177px;">Distributed Architecture</div>
<div style="top:362.80px;font-size:13px;line-height:17px;height:17px;color:#000;white-space:pre;letter-spacing:-0.146px;left:207px;">dNodeB 2U-4U</div>
<div style="top:382.80px;font-size:13px;line-height:17px;height:17px;color:#000;white-space:pre;letter-spacing:-0.161px;left:238px;">d2U+RRH 2100 (*)</div>
<div style="top:402.80px;font-size:13px;line-height:17px;height:17px;color:#000;white-space:pre;letter-spacing:-0.07px;left:238px;">d2U (*)</div>
<div style="top:422.80px;font-size:13px;line-height:17px;height:17px;color:#000;white-space:pre;letter-spacing:0.004px;left:152px;">Controller</div>
<div style="top:443.80px;font-size:13px;line-height:17px;height:17px;color:#000;white-space:pre;letter-spacing:-0.056px;left:177px;">Radio Network Controller</div>
<div style="top:462.80px;font-size:13px;line-height:17px;height:17px;color:#000;white-space:pre;letter-spacing:0.007px;left:207px;">3BK 33532 AC - RNC DCPS</div>
<div style="top:482.80px;font-size:13px;line-height:17px;height:17px;color:#000;white-space:pre;letter-spacing:-0.001px;left:152px;">Spares and Retrofit</div>
<div style="top:502.80px;font-size:13px;line-height:17px;height:17px;color:#000;white-space:pre;letter-spacing:0.014px;left:177px;">W-CDMA Spares and Retrofit</div>
<div style="top:522.80px;font-size:13px;line-height:17px;height:17px;color:#000;white-space:pre;letter-spacing:0.183px;left:152px;">Spares</div>
<div style="top:543.80px;font-size:13px;line-height:17px;height:17px;color:#000;white-space:pre;letter-spacing:0.117px;left:177px;">W-CDMA Spares in Lot 1 / Option B / Phase_2</div>
<div style="top:563.80px;font-size:13px;line-height:17px;height:17px;color:#000;white-space:pre;letter-spacing:0.057px;left:152px;">Packing and Freight</div>
<div style="top:582.80px;font-size:13px;line-height:17px;height:17px;color:#000;white-space:pre;letter-spacing:-0.021px;left:177px;">W-CDMA Packing and Freight for Hardware</div>
<div style="top:623.80px;font-size:13px;line-height:17px;height:17px;color:#000;white-space:pre;letter-spacing:-0.028px;left:152px;">Initial RTU</div>
<div style="top:643.80px;font-size:13px;line-height:17px;height:17px;color:#000;white-space:pre;letter-spacing:0.107px;left:177px;">HW Capacity licensing</div>
<div style="top:223.80px;font-size:13px;line-height:17px;height:17px;color:#000;white-space:pre;letter-spacing:-0.23px;left:648.4px;width:100px;text-align:right;">145</div>
<div style="top:223.80px;font-size:13px;line-height:17px;height:17px;color:#000;white-space:pre;letter-spacing:-0.23px;left:859.4px;width:100px;text-align:right;">234</div>
<div style="top:242.80px;font-size:13px;line-height:17px;height:17px;color:#000;white-space:pre;letter-spacing:-0.23px;left:648.4px;width:100px;text-align:right;">4 324</div>
<div style="top:242.80px;font-size:13px;line-height:17px;height:17px;color:#000;white-space:pre;letter-spacing:-0.23px;left:859.4px;width:100px;text-align:right;">1 677 209</div>
<div style="top:263.80px;font-size:13px;line-height:17px;height:17px;color:#000;white-space:pre;letter-spacing:-0.23px;left:648.4px;width:100px;text-align:right;">123 123</div>
<div style="top:263.80px;font-size:13px;line-height:17px;height:17px;color:#000;white-space:pre;letter-spacing:-0.23px;left:859.4px;width:100px;text-align:right;">123</div>
<div style="top:283.80px;font-size:13px;line-height:17px;height:17px;color:#000;white-space:pre;letter-spacing:-0.23px;left:648.4px;width:100px;text-align:right;">12 367</div>
<div style="top:283.80px;font-size:13px;line-height:17px;height:17px;color:#000;white-space:pre;letter-spacing:-0.23px;left:859.4px;width:100px;text-align:right;">7 657</div>
<div style="top:303.80px;font-size:13px;line-height:17px;height:17px;color:#000;white-space:pre;letter-spacing:-0.23px;left:648.4px;width:100px;text-align:right;">3 123</div>
<div style="top:303.80px;font-size:13px;line-height:17px;height:17px;color:#000;white-space:pre;letter-spacing:-0.23px;left:859.4px;width:100px;text-align:right;">23 444</div>
<div style="top:323.80px;font-size:13px;line-height:17px;height:17px;color:#000;white-space:pre;letter-spacing:-0.23px;left:438.4px;width:100px;text-align:right;">22</div>
<div style="top:323.80px;font-size:13px;line-height:17px;height:17px;color:#000;white-space:pre;letter-spacing:-0.23px;left:543.4px;width:100px;text-align:right;">6 016</div>
<div style="top:323.80px;font-size:13px;line-height:17px;height:17px;color:#000;white-space:pre;letter-spacing:-0.23px;left:648.4px;width:100px;text-align:right;">123</div>
<div style="top:323.80px;font-size:13px;line-height:17px;height:17px;color:#000;white-space:pre;letter-spacing:-0.23px;left:753.2px;width:100px;text-align:right;">10 732</div>
<div style="top:323.80px;font-size:13px;line-height:17px;height:17px;color:#000;white-space:pre;letter-spacing:-0.23px;left:859.4px;width:100px;text-align:right;">45 688</div>
<div style="top:342.80px;font-size:13px;line-height:17px;height:17px;color:#000;white-space:pre;letter-spacing:-0.23px;left:648.4px;width:100px;text-align:right;">231 780</div>
<div style="top:342.80px;font-size:13px;line-height:17px;height:17px;color:#000;white-space:pre;letter-spacing:-0.23px;left:859.4px;width:100px;text-align:right;">45 764</div>
<div style="top:362.80px;font-size:13px;line-height:17px;height:17px;color:#000;white-space:pre;letter-spacing:-0.23px;left:648.4px;width:100px;text-align:right;">231 780</div>
<div style="top:362.80px;font-size:13px;line-height:17px;height:17px;color:#000;white-space:pre;letter-spacing:-0.23px;left:859.4px;width:100px;text-align:right;">446 519</div>
<div style="top:382.80px;font-size:13px;line-height:17px;height:17px;color:#000;white-space:pre;letter-spacing:-0.23px;left:438.4px;width:100px;text-align:right;">44</div>
<div style="top:382.80px;font-size:13px;line-height:17px;height:17px;color:#000;white-space:pre;letter-spacing:-0.23px;left:543.4px;width:100px;text-align:right;">23 445</div>
<div style="top:382.80px;font-size:13px;line-height:17px;height:17px;color:#000;white-space:pre;letter-spacing:-0.23px;left:648.4px;width:100px;text-align:right;">130 992</div>
<div style="top:382.80px;font-size:13px;line-height:17px;height:17px;color:#000;white-space:pre;letter-spacing:-0.23px;left:753.2px;width:100px;text-align:right;">14 636</div>
<div style="top:382.80px;font-size:13px;line-height:17px;height:17px;color:#000;white-space:pre;letter-spacing:-0.23px;left:859.4px;width:100px;text-align:right;">2 342 423</div>
<div style="top:402.80px;font-size:13px;line-height:17px;height:17px;color:#000;white-space:pre;letter-spacing:-0.23px;left:438.4px;width:100px;text-align:right;">12</div>
<div style="top:402.80px;font-size:13px;line-height:17px;height:17px;color:#000;white-space:pre;letter-spacing:-0.23px;left:543.4px;width:100px;text-align:right;">543</div>
<div style="top:402.80px;font-size:13px;line-height:17px;height:17px;color:#000;white-space:pre;letter-spacing:-0.23px;left:648.4px;width:100px;text-align:right;">100 788</div>
<div style="top:402.80px;font-size:13px;line-height:17px;height:17px;color:#000;white-space:pre;letter-spacing:-0.23px;left:753.2px;width:100px;text-align:right;">5 739</div>
<div style="top:402.80px;font-size:13px;line-height:17px;height:17px;color:#000;white-space:pre;letter-spacing:-0.23px;left:859.4px;width:100px;text-align:right;">45 655</div>
<div style="top:422.80px;font-size:13px;line-height:17px;height:17px;color:#000;white-space:pre;letter-spacing:-0.23px;left:648.4px;width:100px;text-align:right;">25 992</div>
<div style="top:422.80px;font-size:13px;line-height:17px;height:17px;color:#000;white-space:pre;letter-spacing:-0.23px;left:859.4px;width:100px;text-align:right;">45 646</div>
<div style="top:443.80px;font-size:13px;line-height:17px;height:17px;color:#000;white-space:pre;letter-spacing:-0.23px;left:648.4px;width:100px;text-align:right;">3 333</div>
<div style="top:443.80px;font-size:13px;line-height:17px;height:17px;color:#000;white-space:pre;letter-spacing:-0.23px;left:859.4px;width:100px;text-align:right;">56 757</div>
<div style="top:462.80px;font-size:13px;line-height:17px;height:17px;color:#000;white-space:pre;letter-spacing:-0.23px;left:438.4px;width:100px;text-align:right;">6</div>
<div style="top:462.80px;font-size:13px;line-height:17px;height:17px;color:#000;white-space:pre;letter-spacing:-0.23px;left:543.4px;width:100px;text-align:right;">8 990</div>
<div style="top:462.80px;font-size:13px;line-height:17px;height:17px;color:#000;white-space:pre;letter-spacing:-0.23px;left:648.4px;width:100px;text-align:right;">44 444</div>
<div style="top:462.80px;font-size:13px;line-height:17px;height:17px;color:#000;white-space:pre;letter-spacing:-0.23px;left:753.2px;width:100px;text-align:right;">24 583</div>
<div style="top:462.80px;font-size:13px;line-height:17px;height:17px;color:#000;white-space:pre;letter-spacing:-0.23px;left:859.4px;width:100px;text-align:right;">89 789</div>
<div style="top:482.80px;font-size:13px;line-height:17px;height:17px;color:#000;white-space:pre;letter-spacing:-0.23px;left:648.4px;width:100px;text-align:right;">55 555</div>
<div style="top:502.80px;font-size:13px;line-height:17px;height:17px;color:#000;white-space:pre;letter-spacing:-0.23px;left:648.4px;width:100px;text-align:right;">666 767</div>
<div style="top:522.80px;font-size:13px;line-height:17px;height:17px;color:#000;white-space:pre;letter-spacing:-0.23px;left:648.4px;width:100px;text-align:right;">0 766</div>
<div style="top:522.80px;font-size:13px;line-height:17px;height:17px;color:#000;white-space:pre;letter-spacing:-0.23px;left:859.4px;width:100px;text-align:right;">70 670</div>
<div style="top:543.80px;font-size:13px;line-height:17px;height:17px;color:#000;white-space:pre;letter-spacing:-0.23px;left:438.4px;width:100px;text-align:right;">23</div>
<div style="top:543.80px;font-size:13px;line-height:17px;height:17px;color:#000;white-space:pre;letter-spacing:-0.23px;left:543.4px;width:100px;text-align:right;">4 567</div>
<div style="top:543.80px;font-size:13px;line-height:17px;height:17px;color:#000;white-space:pre;letter-spacing:-0.23px;left:648.4px;width:100px;text-align:right;">456 456</div>
<div style="top:543.80px;font-size:13px;line-height:17px;height:17px;color:#000;white-space:pre;letter-spacing:-0.23px;left:753.2px;width:100px;text-align:right;">3 747</div>
<div style="top:543.80px;font-size:13px;line-height:17px;height:17px;color:#000;white-space:pre;letter-spacing:-0.23px;left:859.4px;width:100px;text-align:right;">354 534</div>
<div style="top:563.80px;font-size:13px;line-height:17px;height:17px;color:#000;white-space:pre;letter-spacing:-0.23px;left:648.4px;width:100px;text-align:right;">75 674</div>
<div style="top:563.80px;font-size:13px;line-height:17px;height:17px;color:#000;white-space:pre;letter-spacing:-0.23px;left:859.4px;width:100px;text-align:right;">34 554</div>
<div style="top:582.80px;font-size:13px;line-height:17px;height:17px;color:#000;white-space:pre;letter-spacing:-0.23px;left:648.4px;width:100px;text-align:right;">867 867</div>
<div style="top:582.80px;font-size:13px;line-height:17px;height:17px;color:#000;white-space:pre;letter-spacing:-0.23px;left:859.4px;width:100px;text-align:right;">57 567</div>
<div style="top:602.80px;font-size:13px;line-height:17px;height:17px;color:#000;white-space:pre;letter-spacing:-0.23px;left:648.4px;width:100px;text-align:right;">0</div>
<div style="top:602.80px;font-size:13px;line-height:17px;height:17px;color:#000;white-space:pre;letter-spacing:-0.23px;left:859.4px;width:100px;text-align:right;">4 566</div>
<div style="top:623.80px;font-size:13px;line-height:17px;height:17px;color:#000;white-space:pre;letter-spacing:-0.23px;left:648.4px;width:100px;text-align:right;">0</div>
<div style="top:623.80px;font-size:13px;line-height:17px;height:17px;color:#000;white-space:pre;letter-spacing:-0.23px;left:859.4px;width:100px;text-align:right;">23 424</div>
<div style="top:643.80px;font-size:13px;line-height:17px;height:17px;color:#000;white-space:pre;letter-spacing:-0.23px;left:648.4px;width:100px;text-align:right;">0</div>
<div style="top:643.80px;font-size:13px;line-height:17px;height:17px;color:#000;white-space:pre;letter-spacing:-0.23px;left:859.4px;width:100px;text-align:right;">456 453</div>
<div style="top:158.70px;font-size:13px;line-height:17px;height:17px;color:#000;white-space:pre;font-weight:bold;letter-spacing:0.044px;left:199.39999999999998px;width:120px;text-align:center;">Description</div>
<div style="top:159.80px;font-size:13px;line-height:17px;height:17px;color:#000;white-space:pre;font-weight:bold;letter-spacing:0.346px;left:458.0px;width:83px;text-align:center;overflow:hidden;">Quantity</div>
<div style="top:127.10px;font-size:13px;line-height:17px;height:17px;color:#000;white-space:pre;font-weight:bold;letter-spacing:-0.086px;left:542.0px;width:104px;text-align:center;overflow:hidden;clip-path:inset(8.90px 0 0.00px 0);">Unit Cost in</div>
<div style="top:143.45px;font-size:13px;line-height:17px;height:17px;color:#000;white-space:pre;font-weight:bold;letter-spacing:-0.218px;left:542.0px;width:104px;text-align:center;overflow:hidden;">EUR</div>
<div style="top:159.80px;font-size:13px;line-height:17px;height:17px;color:#000;white-space:pre;font-weight:bold;letter-spacing:0.374px;left:542.0px;width:104px;text-align:center;overflow:hidden;">without VAT</div>
<div style="top:176.15px;font-size:13px;line-height:17px;height:17px;color:#000;white-space:pre;font-weight:bold;letter-spacing:0.146px;left:542.0px;width:104px;text-align:center;overflow:hidden;">Air / DDU /</div>
<div style="top:192.50px;font-size:13px;line-height:17px;height:17px;color:#000;white-space:pre;font-weight:bold;letter-spacing:-0.165px;left:542.0px;width:104px;text-align:center;overflow:hidden;clip-path:inset(0.00px 0 8.50px 0);">7,000000000000</div>
<div style="top:127.10px;font-size:13px;line-height:17px;height:17px;color:#000;white-space:pre;font-weight:bold;letter-spacing:-0.142px;left:647.0px;width:104px;text-align:center;overflow:hidden;clip-path:inset(8.90px 0 0.00px 0);">Total Costs in</div>
<div style="top:143.45px;font-size:13px;line-height:17px;height:17px;color:#000;white-space:pre;font-weight:bold;letter-spacing:-0.218px;left:647.0px;width:104px;text-align:center;overflow:hidden;">EUR</div>
<div style="top:159.80px;font-size:13px;line-height:17px;height:17px;color:#000;white-space:pre;font-weight:bold;letter-spacing:0.374px;left:647.0px;width:104px;text-align:center;overflow:hidden;">without VAT</div>
<div style="top:176.15px;font-size:13px;line-height:17px;height:17px;color:#000;white-space:pre;font-weight:bold;letter-spacing:0.146px;left:647.0px;width:104px;text-align:center;overflow:hidden;">Air / DDU /</div>
<div style="top:192.50px;font-size:13px;line-height:17px;height:17px;color:#000;white-space:pre;font-weight:bold;letter-spacing:-0.165px;left:647.0px;width:104px;text-align:center;overflow:hidden;clip-path:inset(0.00px 0 8.50px 0);">7,000000000000</div>
<div style="top:127.10px;font-size:13px;line-height:17px;height:17px;color:#000;white-space:pre;font-weight:bold;letter-spacing:0.126px;left:752.0px;width:105px;text-align:center;overflow:hidden;clip-path:inset(8.90px 0 0.00px 0);">Unit Price in</div>
<div style="top:143.45px;font-size:13px;line-height:17px;height:17px;color:#000;white-space:pre;font-weight:bold;letter-spacing:-0.218px;left:752.0px;width:105px;text-align:center;overflow:hidden;">EUR</div>
<div style="top:159.80px;font-size:13px;line-height:17px;height:17px;color:#000;white-space:pre;font-weight:bold;letter-spacing:0.374px;left:752.0px;width:105px;text-align:center;overflow:hidden;">without VAT</div>
<div style="top:176.15px;font-size:13px;line-height:17px;height:17px;color:#000;white-space:pre;font-weight:bold;letter-spacing:0.146px;left:752.0px;width:105px;text-align:center;overflow:hidden;">Air / DDU /</div>
<div style="top:192.50px;font-size:13px;line-height:17px;height:17px;color:#000;white-space:pre;font-weight:bold;letter-spacing:-0.165px;left:752.0px;width:105px;text-align:center;overflow:hidden;clip-path:inset(0.00px 0 8.50px 0);">7,000000000000</div>
<div style="top:127.10px;font-size:13px;line-height:17px;height:17px;color:#000;white-space:pre;font-weight:bold;letter-spacing:0.106px;left:858.0px;width:104px;text-align:center;overflow:hidden;clip-path:inset(8.90px 0 0.00px 0);">Total Prices in</div>
<div style="top:143.45px;font-size:13px;line-height:17px;height:17px;color:#000;white-space:pre;font-weight:bold;letter-spacing:-0.218px;left:858.0px;width:104px;text-align:center;overflow:hidden;">EUR</div>
<div style="top:159.80px;font-size:13px;line-height:17px;height:17px;color:#000;white-space:pre;font-weight:bold;letter-spacing:0.374px;left:858.0px;width:104px;text-align:center;overflow:hidden;">without VAT</div>
<div style="top:176.15px;font-size:13px;line-height:17px;height:17px;color:#000;white-space:pre;font-weight:bold;letter-spacing:0.146px;left:858.0px;width:104px;text-align:center;overflow:hidden;">Air / DDU /</div>
<div style="top:192.50px;font-size:13px;line-height:17px;height:17px;color:#000;white-space:pre;font-weight:bold;letter-spacing:-0.165px;left:858.0px;width:104px;text-align:center;overflow:hidden;clip-path:inset(0.00px 0 8.50px 0);">7,000000000000</div>
<div style="left:963px;top:136px;width:47px;height:65px;overflow:hidden;"><div style="left:-2px;top:16.2px;width:110px;text-align:center;font-weight:bold;font-size:13px;line-height:16.3px;white-space:nowrap;"><span style="letter-spacing:0.4px">Discount in</span><br><span style="letter-spacing:-0.8px">EUR</span></div></div>
<div style="left:1010px;top:79px;width:14px;height:586px;background:#eae8e3;"></div>
<div style="left:1010px;top:79px;width:14px;height:6px;background:#d4d0c8;box-shadow:inset 1px 1px 0 #fff,inset 0 -1px 0 #404040;"></div>
<div style="left:1010px;top:85px;width:14px;height:15px;background:#d4d0c8;box-shadow:inset 1px 1px 0 #fff,inset -1px -1px 0 #808080;"></div>
<svg style="left:1013px;top:90px" width="8" height="5"><path d="M0 4.5 L4 0.5 L8 4.5Z" fill="#000"/></svg>
<div style="left:1010px;top:124px;width:14px;height:37px;background:#d4d0c8;box-shadow:inset 1px 1px 0 #fff,inset -1px -1px 0 #404040,inset -2px -2px 0 #808080;"></div>
<div style="left:1010px;top:651px;width:14px;height:14px;background:#d4d0c8;box-shadow:inset 1px 1px 0 #fff,inset -1px -1px 0 #808080;"></div>
<svg style="left:1013px;top:656px" width="8" height="5"><path d="M0 0.5 L4 4.5 L8 0.5Z" fill="#000"/></svg>
<div style="left:0px;top:664px;width:1024px;height:15px;background:#d4d0c8;"></div>
<div style="left:612px;top:665px;width:398px;height:14px;background:#eae8e3;"></div>
<div style="left:612px;top:665px;width:4px;height:14px;background:#d4d0c8;box-shadow:inset 1px 0 0 #fff,inset -1px 0 0 #404040;"></div>
<div style="left:617px;top:665px;width:14px;height:14px;background:#d4d0c8;box-shadow:inset 1px 1px 0 #fff,inset -1px -1px 0 #808080;"></div>
<svg style="left:621px;top:668px" width="5" height="8"><path d="M4.5 0 L0.5 4 L4.5 8Z" fill="#000"/></svg>
<div style="left:631px;top:665px;width:158px;height:14px;background:#d4d0c8;box-shadow:inset 1px 1px 0 #fff,inset -1px -1px 0 #404040,inset -2px -2px 0 #808080;"></div>
<div style="left:990px;top:665px;width:15px;height:14px;background:#d4d0c8;box-shadow:inset 1px 1px 0 #fff,inset -1px -1px 0 #808080;"></div>
<svg style="left:995px;top:668px" width="5" height="8"><path d="M0.5 0 L4.5 4 L0.5 8Z" fill="#000"/></svg>
<div style="left:1006px;top:665px;width:4px;height:14px;background:#d4d0c8;box-shadow:inset 1px 0 0 #fff,inset -1px 0 0 #404040;"></div>
<div style="left:1010px;top:665px;width:14px;height:14px;background:#d4d0c8;box-shadow:inset 1px 1px 0 #404040;"></div>
<svg style="left:0;top:664px" width="612" height="16" viewBox="0 0 612 16"><path d="M0 1.500 H612" stroke="#808080" stroke-width="1"/><path d="M358.5 1.5 L365.0 14.5 L434.5 14.5 L441 1.5" fill="#d4d0c8" stroke="#000" stroke-width="1" stroke-linejoin="round"/><path d="M298.5 1.5 L305.0 14.5 L358.0 14.5 L364.5 1.5" fill="#d4d0c8" stroke="#000" stroke-width="1" stroke-linejoin="round"/><path d="M240 1.5 L246.5 14.5 L298.0 14.5 L304.5 1.5" fill="#d4d0c8" stroke="#000" stroke-width="1" stroke-linejoin="round"/><path d="M181 1.5 L187.5 14.5 L239.5 14.5 L246 1.5" fill="#d4d0c8" stroke="#000" stroke-width="1" stroke-linejoin="round"/><path d="M60.5 1.5 L67.0 14.5 L120.5 14.5 L127 1.5" fill="#d4d0c8" stroke="#000" stroke-width="1" stroke-linejoin="round"/><path d="M121 1.5 L127.5 14.5 L181.0 14.5 L187.5 1.5" fill="#fff" stroke="#000" stroke-width="1" stroke-linejoin="round"/><path d="M121.5 1.0 H187.0 V2.1 H121.5z" fill="#fff"/></svg>
<div style="left:73.0px;top:664.5px;font-size:10.5px;line-height:14px;white-space:pre;letter-spacing:-0.136px;">Phase_1</div>
<div style="left:128.5px;top:664.5px;font-size:11.5px;line-height:14px;white-space:pre;letter-spacing:0.373px;font-weight:bold;">Phase_2</div>
<div style="left:192.0px;top:664.5px;font-size:10.5px;line-height:14px;white-space:pre;letter-spacing:0.078px;">Phase_3</div>
<div style="left:251.3px;top:664.5px;font-size:10.5px;line-height:14px;white-space:pre;letter-spacing:-0.065px;">Phase_4</div>
<div style="left:310.5px;top:664.5px;font-size:10.5px;line-height:14px;white-space:pre;letter-spacing:-0.022px;">Phase_5</div>
<div style="left:370.5px;top:664.5px;font-size:10.5px;line-height:14px;white-space:pre;letter-spacing:0.048px;">Total Phase</div>
<div style="left:60px;top:666px;width:1px;height:13px;background:#808080;"></div>
<svg style="left:0;top:665px" width="62" height="14" viewBox="0 0 62 14"><path d="M4.500 4 v7.500" stroke="#000" stroke-width="1.300"/><path d="M10 4 L6 7.750 L10 11.500z M25.500 4 L21.500 7.750 L25.500 11.500z M36 4 L40 7.750 L36 11.500z M51 4 L55 7.750 L51 11.500z" fill="#000"/><path d="M56.500 4 v7.500" stroke="#000" stroke-width="1.300"/></svg>
<div style="left:0px;top:664px;width:1px;height:15px;background:#404040;"></div>
<div style="left:0px;top:679px;width:1024px;height:11px;background:#d4d0c8;"></div>
<div style="left:0px;top:679px;width:1024px;height:1px;background:#fff;"></div>
<div style="left:732px;top:683px;width:1px;height:7px;background:#e2e0da;"></div>
<div style="left:731px;top:683px;width:1px;height:7px;background:#c9c5bc;"></div>
<div style="left:767px;top:683px;width:1px;height:7px;background:#e2e0da;"></div>
<div style="left:766px;top:683px;width:1px;height:7px;background:#c9c5bc;"></div>
<div style="left:878px;top:683px;width:1px;height:7px;background:#e2e0da;"></div>
<div style="left:877px;top:683px;width:1px;height:7px;background:#c9c5bc;"></div>
<div style="left:947px;top:683px;width:1px;height:7px;background:#e2e0da;"></div>
<div style="left:946px;top:683px;width:1px;height:7px;background:#c9c5bc;"></div>
<div style="left:983px;top:683px;width:1px;height:7px;background:#e2e0da;"></div>
<div style="left:982px;top:683px;width:1px;height:7px;background:#c9c5bc;"></div>
<div style="top:684.89px;font-size:11px;line-height:14px;height:14px;color:#000;white-space:pre;left:4px;">Prêt</div>
<div style="top:685.19px;font-size:11px;line-height:14px;height:14px;color:#000;white-space:pre;left:906px;">MAJ</div>
</div></body></html>
